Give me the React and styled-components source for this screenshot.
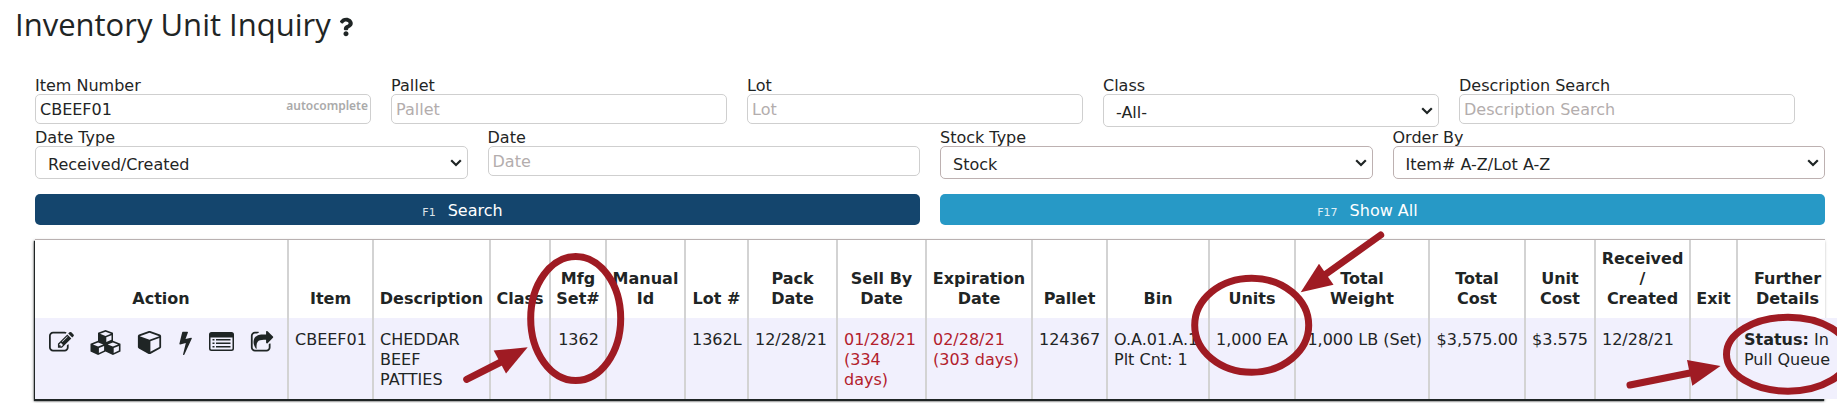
import React from "react";
import styled, { createGlobalStyle } from "styled-components";
import { FaQuestion } from "react-icons/fa";

const columns = [
  { label: "Action" },
  { label: "Item", width: 85 },
  { label: "Description", width: 117 },
  { label: "Class", width: 60 },
  { label: "Mfg Set#", width: 56 },
  { label: "Manual Id", width: 79 },
  { label: "Lot #", width: 63 },
  { label: "Pack Date", width: 89 },
  { label: "Sell By Date", width: 89 },
  { label: "Expiration Date", width: 106 },
  { label: "Pallet", width: 75 },
  { label: "Bin", width: 102 },
  { label: "Units", width: 86 },
  { label: "Total\nWeight", width: 134 },
  { label: "Total Cost", width: 96 },
  { label: "Unit Cost", width: 70 },
  { label: "Received\n/\nCreated", width: 95 },
  { label: "Exit", width: 47 },
  { label: "Further Details", width: 99 },
];

const cubePath =
  "M896 1629l640-349v-636l-640 233v752zM832 765l698-254-698-254-698 254zM1664 512v768q0 35-18 65t-49 47l-704 384q-28 16-61 16t-61-16l-704-384q-31-17-49-47t-18-65v-768q0-40 23-73t61-47l704-256q22-8 44-8t44 8l704 256q38 14 61 47t23 73z";

const actions = [
  {
    name: "Edit",
    width: 25,
    box: "0 0 1792 1792",
    art: (
      <path d="M888 1184l116-116-152-152-116 116v56h96v96h56zM1328 464q-16-16-33 1l-350 350q-17 17-1 33t33-1l350-350q17-17 1-33zM1408 1058v190q0 119-84.5 203.5t-203.5 84.5h-832q-119 0-203.5-84.5t-84.5-203.5v-832q0-119 84.5-203.5t203.5-84.5h832q63 0 117 25 15 7 18 23 3 17-9 29l-49 49q-14 14-32 8-23-6-45-6h-832q-66 0-113 47t-47 113v832q0 66 47 113t113 47h832q66 0 113-47t47-113v-126q0-13 9-22l64-64q15-15 35-7t20 29zM1312 320l288 288-672 672h-288v-288zM1756 452l-92 92-288-288 92-92q28-28 68-28t68 28l152 152q28 28 28 68t-28 68z" />
    ),
  },
  {
    name: "Pallet units",
    width: 31,
    box: "0 0 31 25",
    art: (
      <path
        fillRule="evenodd"
        d="M15.500 0l7.500 2.800v8l7.500 3v7.600l-7.600 3.600-7.400-3.500-7.400 3.500L.5 21.400v-7.600l7.500-3v-8zM15.500 1.700L10 3.800l5.500 2.100L21 3.800zM16.300 7.300v4.600l5.200-2.100V5.300zM8.100 12.600l-5.200 2 5.200 2 5.200-2zM8.900 18v5l5.200-2.500V16zM22.900 12.600l-5.200 2 5.200 2 5.200-2zM23.700 18v5l5.200-2.500V16z"
      />
    ),
  },
  {
    name: "Unit",
    width: 25,
    box: "-64 64 1792 1792",
    art: <path d={cubePath} />,
  },
  {
    name: "Quick action",
    width: 15,
    box: "350 0 1075 1792",
    art: (
      <path d="M1333 566q18 20 7 44l-540 1157q-13 25-42 25-4 0-14-2-17-5-25.500-19t-4.500-30l197-808-406 101q-4 1-12 1-18 0-31-11-18-15-13-39l201-825q4-14 16-23t28-9h328q19 0 32 12.500t13 29.500q0 8-5 18l-171 463 396-98q8-2 12-2 19 0 34 15z" />
    ),
  },
  {
    name: "Details",
    width: 25,
    box: "0 0 25 25",
    art: (
      <>
        <path
          fillRule="evenodd"
          d="M2.500 2h20a2.500 2.500 0 0 1 2.500 2.500v14a2.500 2.500 0 0 1-2.500 2.500h-20a2.500 2.500 0 0 1-2.500-2.500v-14a2.500 2.500 0 0 1 2.500-2.500zM1.500 7.500v11q0 1 1 1h20q1 0 1-1v-11z"
        />
        <path d="M3.500 9h2v1.600h-2zM7 9h14.500v1.600h-14.500zM3.500 12.500h2v1.600h-2zM7 12.500h14.500v1.600h-14.500zM3.500 16h2v1.600h-2zM7 16h14.500v1.600h-14.500z" />
      </>
    ),
  },
  {
    name: "Share",
    width: 25,
    box: "0 0 1792 1792",
    art: (
      <path d="M1472 989v259q0 119-84.500 203.500t-203.500 84.500h-832q-119 0-203.500-84.500t-84.500-203.500v-832q0-119 84.500-203.500t203.500-84.500h255q13 0 22.500 9.500t9.500 22.500q0 27-26 32-77 26-133 60-10 4-16 4h-112q-66 0-113 47t-47 113v832q0 66 47 113t113 47h832q66 0 113-47t47-113v-214q0-19 18-29 28-13 54-37 16-16 35-8 21 9 21 29zM1645 557l-384 384q-18 19-45 19-12 0-25-5-39-17-39-59v-192h-160q-323 0-438 131-119 137-74 473 3 23-20 34-8 2-12 2-16 0-26-13-10-14-21-31t-39.500-68.500-49.500-99.500-38.500-114-17.500-122q0-49 3.500-91t14-90 28-88 47-81.500 68.500-74 94.500-61.500 124.500-48.500 159.500-30.500 196.500-11h160v-192q0-42 39-59 13-5 25-5 26 0 45 19l384 384q19 19 19 45t-19 45z" />
    ),
  },
];

function TextField({ id, label, value, hint }) {
  return (
    <Field>
      <label htmlFor={id}>{label}</label>
      <Control>
        <Input id={id} placeholder={label} defaultValue={value} />
        {hint && <Hint>{hint}</Hint>}
      </Control>
    </Field>
  );
}

function SelectField({ id, label, option, strong }) {
  return (
    <Field>
      <label htmlFor={id}>{label}</label>
      <Control>
        <Select id={id} $strong={strong}>
          <option>{option}</option>
        </Select>
        <Chevron viewBox="0 0 12 8" aria-hidden="true">
          <path d="M1.200 1.200L6 6l4.800-4.800" />
        </Chevron>
      </Control>
    </Field>
  );
}

export default function App() {
  return (
    <>
      <GlobalStyle />
      <Page>
        <Title>
          Inventory Unit Inquiry
          <FaQuestion />
        </Title>
        <Filters onSubmit={(e) => e.preventDefault()}>
          <FiveUp>
            <TextField id="item" label="Item Number" value="CBEEF01" hint="autocomplete" />
            <TextField id="pallet" label="Pallet" />
            <TextField id="lot" label="Lot" />
            <SelectField id="class" label="Class" option="-All-" />
            <TextField id="description" label="Description Search" />
          </FiveUp>
          <FourUp>
            <SelectField id="dateType" label="Date Type" option="Received/Created" />
            <TextField id="date" label="Date" />
            <SelectField id="stockType" label="Stock Type" option="Stock" strong />
            <SelectField id="orderBy" label="Order By" option="Item# A-Z/Lot A-Z" strong />
          </FourUp>
          <Buttons>
            <Button type="submit" $color="#14456d">
              <small>F1</small>Search
            </Button>
            <Button type="button" $color="#2799c6">
              <small>F17</small>Show All
            </Button>
          </Buttons>
        </Filters>
        <Results>
          <Table>
            <colgroup>
              {columns.map((col) => (
                <col key={col.label} width={col.width} />
              ))}
            </colgroup>
            <thead>
              <tr>
                {columns.map((col) => (
                  <th key={col.label}>{col.label}</th>
                ))}
              </tr>
            </thead>
            <tbody>
              <tr>
                <td>
                  <Actions>
                    {actions.map((action) => (
                      <IconButton key={action.name} aria-label={action.name}>
                        <svg width={action.width} height="25" viewBox={action.box}>
                          {action.art}
                        </svg>
                      </IconButton>
                    ))}
                  </Actions>
                </td>
                <td>CBEEF01</td>
                <td>CHEDDAR BEEF PATTIES</td>
                <td></td>
                <Centered>1362</Centered>
                <td></td>
                <td>1362L</td>
                <td>12/28/21</td>
                <Expired>01/28/21 (334 days)</Expired>
                <Expired>02/28/21 (303 days)</Expired>
                <td>124367</td>
                <td>
                  O.A.01.A.1
                  <br />
                  Plt Cnt: 1
                </td>
                <Numeric>1,000 EA</Numeric>
                <Numeric>1,000 LB (Set)</Numeric>
                <Numeric>$3,575.00</Numeric>
                <Numeric>$3.575</Numeric>
                <td>12/28/21</td>
                <td></td>
                <td>
                  <b>Status:</b> In
                  <br />
                  Pull Queue
                </td>
              </tr>
            </tbody>
          </Table>
        </Results>
        <Markup viewBox="0 0 1837 404" aria-hidden="true">
          <ellipse cx="575.700" cy="318.500" rx="45" ry="62" />
          <ellipse cx="1251.700" cy="325.300" rx="57" ry="47" />
          <ellipse cx="1788" cy="354.200" rx="61.500" ry="37" />
          <path d="M466.700 379.300L502 361.500M1380.700 235L1326 274M1630 385L1690 373" />
          <polygon points="527.700,347.300 493.700,350.500 506,373.500" />
          <polygon points="1300.700,292.300 1319,263.700 1333.500,284.700" />
          <polygon points="1720.500,366 1687,360 1692.300,385.700" />
        </Markup>
      </Page>
    </>
  );
}

const GlobalStyle = createGlobalStyle`
  * {
    box-sizing: border-box;
  }
  body {
    margin: 0;
    overflow-x: hidden;
    background: #fff;
    color: #1f2525;
    font: 16px/20px "DejaVu Sans", Verdana, sans-serif;
  }
  input, select, button {
    font: inherit;
    color: inherit;
  }
`;

const Page = styled.main`
  position: relative;
  overflow: hidden;
`;

const Title = styled.h1`
  display: flex;
  align-items: center;
  gap: 8px;
  height: 75px;
  margin: 0;
  padding: 0 0 27px 15px;
  font: 400 31px/40px "Open Sans", "Noto Sans", sans-serif;
  svg {
    width: 14px;
    height: 20px;
    margin-top: 6px;
  }
`;

const Filters = styled.form`
  padding: 0 12px 0 35px;
`;

const FiveUp = styled.div`
  display: grid;
  grid-template-columns: repeat(5, 1fr);
  gap: 20px;
  padding-right: 30px;
`;

const FourUp = styled.div`
  display: grid;
  grid-template-columns: repeat(4, 1fr);
  gap: 20px;
`;

const Field = styled.div`
  label {
    display: block;
    height: 19px;
    line-height: 22px;
  }
`;

const Control = styled.div`
  position: relative;
  display: flex;
`;

const Input = styled.input`
  width: 100%;
  height: 30px;
  padding: 0 4px;
  border: 1px solid #cfcfcf;
  border-radius: 5px;
  background: #fff;
  &::placeholder {
    color: #b3adad;
    opacity: 1;
  }
`;

const Hint = styled.span`
  position: absolute;
  top: 2px;
  right: 3px;
  color: #aaa;
  font: 600 12px/20px "Noto Sans", sans-serif;
`;

const Select = styled.select`
  appearance: none;
  width: 100%;
  height: 33px;
  padding: 4px 30px 0 12px;
  border: 1px solid ${(p) => (p.$strong ? "#bdb1b1" : "#cfcfcf")};
  border-radius: 5px;
  background: #fff;
`;

const Chevron = styled.svg`
  position: absolute;
  top: 13px;
  right: 6px;
  width: 12px;
  height: 8px;
  fill: none;
  stroke: #1f2525;
  stroke-width: 2.2;
  pointer-events: none;
`;

const Buttons = styled.div`
  display: grid;
  grid-template-columns: repeat(2, 1fr);
  gap: 20px;
  margin-top: 15px;
`;

const Button = styled.button`
  display: flex;
  align-items: center;
  justify-content: center;
  gap: 12px;
  height: 31px;
  padding: 2px 34px 0 4px;
  border: 0;
  border-radius: 5px;
  background: ${(p) => p.$color};
  color: #fff;
  small {
    padding-top: 4px;
    font-size: 11px;
    opacity: 0.85;
  }
`;

const Results = styled.div`
  margin: 14px 12px 4px 35px;
  border-top: 1px solid #b9b1b1;
  box-shadow: -1px 2px 1px #1f2525, -1px 2px 3px #777;
  background: #fff;
`;

const Table = styled.table`
  table-layout: fixed;
  width: calc(100% + 12px);
  border-collapse: separate;
  border-spacing: 0;
  th,
  td {
    padding: 12px 5px 7px 6px;
    border-right: 2px solid #d3d3d3;
    text-align: left;
    vertical-align: top;
    white-space: nowrap;
  }
  th {
    height: 78px;
    padding: 9px 4px;
    text-align: center;
    vertical-align: bottom;
    white-space: pre-line;
  }
  td {
    height: 81px;
    background: #f1f0fd;
  }
  td:nth-child(3) {
    white-space: normal;
  }
  th:last-child,
  td:last-child {
    border-right: 0;
  }
`;

const Actions = styled.div`
  display: flex;
  justify-content: space-between;
  padding: 0 7px 0 8px;
`;

const IconButton = styled.button`
  display: flex;
  padding: 0;
  border: 0;
  background: none;
  cursor: pointer;
  svg {
    fill: currentColor;
  }
`;

const Centered = styled.td`
  && {
    text-align: center;
  }
`;

const Numeric = styled.td`
  && {
    padding-right: 6px;
    text-align: right;
  }
`;

const Expired = styled.td`
  color: #b3202c;
  && {
    white-space: normal;
  }
`;

const Markup = styled.svg`
  position: absolute;
  top: 0;
  left: 0;
  width: 100%;
  fill: none;
  stroke: #9f1b23;
  stroke-width: 7;
  stroke-linecap: round;
  pointer-events: none;
  polygon {
    fill: #9f1b23;
    stroke: none;
  }
`;
